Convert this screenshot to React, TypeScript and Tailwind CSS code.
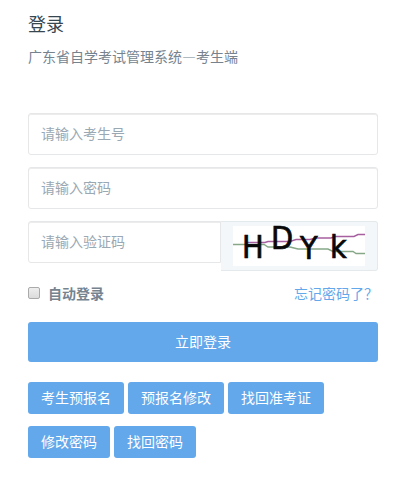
import React, { useState } from 'react';

interface Shortcut {
    label: string;
    action: string;
}

const shortcuts: Shortcut[] = [
    { label: '考生预报名', action: 'pre-register' },
    { label: '预报名修改', action: 'edit-pre-register' },
    { label: '找回准考证', action: 'find-admission-ticket' },
    { label: '修改密码', action: 'change-password' },
    { label: '找回密码', action: 'recover-password' },
];

const inputClass =
    'h-[42px] w-full min-w-0 border border-[#e6e7e9] bg-white px-3 pb-0.5 text-sm text-[#55606e] shadow-[inset_0_1px_0_#ececec] outline-none placeholder:text-[#9aa8b3] focus:border-[#62a8ea]';

const CaptchaImage: React.FC = () => (
    <svg viewBox="0 0 132 40" className="h-10 w-[132px] overflow-visible bg-white" role="img" aria-label="验证码">
        <g fill="none" strokeWidth="1.4">
            <path d="M0 18.500h31l4 2.500h22l8 2h30l5 2.500h20l3 2h9" stroke="#86a888" />
            <path d="M12 16.500h20l3-1h22l6-2h14l6-1.500h15l4-1.500h19l4-2h7" stroke="#a7609f" />
        </g>
        <g fill="#080808" stroke="#080808" strokeWidth="0.7" fontFamily="'DejaVu Sans Condensed', 'DejaVu Sans', sans-serif" fontSize="32">
            <text x="9" y="32">H</text>
            <text x="38" y="23">D</text>
            <text x="67" y="33">Y</text>
            <text x="97" y="32">k</text>
        </g>
    </svg>
);

const App: React.FC = () => {
    const [remember, setRemember] = useState(false);

    return (
        <main lang="zh-CN" className="min-h-screen bg-white pt-3 pr-[25px] pb-5 pl-7 font-['Noto_Sans_CJK_SC',sans-serif] text-sm text-[#76838f]">
            <h1 className="text-lg leading-[22px] text-[#37474f]">登录</h1>
            <p className="mt-[11px] leading-[22px]">广东省自学考试管理系统—考生端</p>

            <form className="mt-[46px]" onSubmit={event => event.preventDefault()}>
                <div className="flex flex-col gap-3">
                    <input type="text" aria-label="考生号" placeholder="请输入考生号" className={`${inputClass} rounded-[3px]`} />
                    <input type="password" aria-label="密码" placeholder="请输入密码" className={`${inputClass} rounded-[3px]`} />
                    <div className="flex items-start">
                        <input type="text" aria-label="验证码" placeholder="请输入验证码" className={`${inputClass} flex-1 rounded-l-[3px]`} />
                        <button type="button" title="换一张" className="shrink-0 rounded-r-[3px] border border-l-0 border-[#e4eaec] bg-[#f3f7f9] px-3 py-1">
                            <CaptchaImage />
                        </button>
                    </div>
                </div>

                <div className="mt-[11px] flex items-center justify-between leading-[22px]">
                    <label className="flex items-center gap-2 font-bold">
                        <input
                            type="checkbox"
                            checked={remember}
                            onChange={event => setRemember(event.target.checked)}
                            className="h-3 w-3 appearance-none rounded-[2px] border border-[#aaaaaa] bg-linear-to-b from-[#eeeeee] to-[#dcdcdc] checked:bg-[#62a8ea] checked:bg-none"
                        />
                        自动登录
                    </label>
                    <a href="#forgot" className="text-[#62a8ea]">忘记密码了？</a>
                </div>

                <button type="submit" className="mt-[18px] h-10 w-full rounded-[3px] bg-[#62a8ea] pb-0.5 text-white">
                    立即登录
                </button>
            </form>

            <div className="mt-5 flex flex-wrap gap-x-1 gap-y-3">
                {shortcuts.map(({ label, action }) => (
                    <button key={action} type="button" className="h-8 rounded-[3px] bg-[#62a8ea] px-[13px] pb-0.5 text-white">
                        {label}
                    </button>
                ))}
            </div>
        </main>
    );
};

export default App;
